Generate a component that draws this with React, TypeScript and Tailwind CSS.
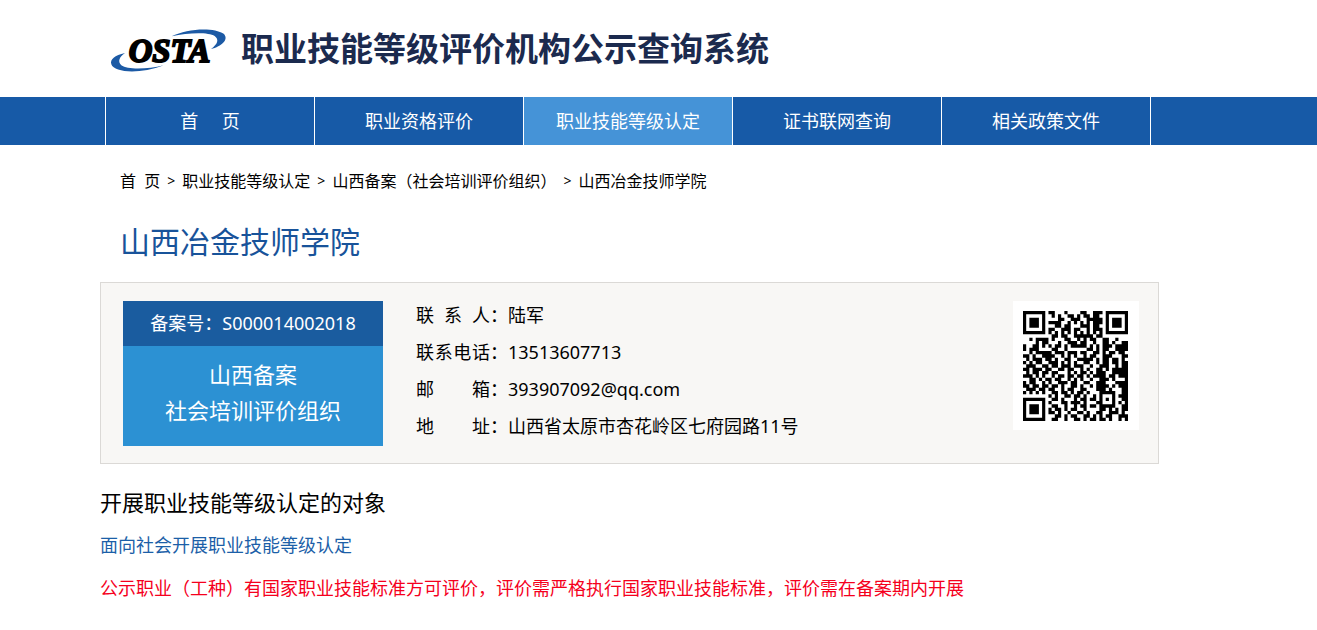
import { Fragment } from "react";
import { clsx } from "clsx";

const navItems = [
  { label: "首\u00a0\u00a0\u00a0\u00a0 页" },
  { label: "职业资格评价" },
  { label: "职业技能等级认定", active: true },
  { label: "证书联网查询" },
  { label: "相关政策文件" },
];

const crumbs = ["首\u00a0 页", "职业技能等级认定", "山西备案（社会培训评价组织）"];

const contacts = [
  { label: ["联", "系", "人"], value: "陆军" },
  { label: ["联", "系", "电", "话"], value: "13513607713" },
  { label: ["邮", "箱"], value: "393907092@qq.com" },
  { label: ["地", "址"], value: "山西省太原市杏花岭区七府园路11号" },
];

const qrModules = [
  "#######.##...#....##..###.#######",
  "#.....#..#.#..##.#.##.##..#.....#",
  "#.###.#....##..###..#####.#.###.#",
  "#.###.#.####..#.#.#.#.###.#.###.#",
  "#.###.#...##.##...###.##..#.###.#",
  "#.....#.##..###.##..#.###.#.....#",
  "#######.#.#.#.#.#.#.#.#.#.#######",
  ".........##.##..######.##........",
  "..#.####.#...##..#.#.##..##..#...",
  "....#.##...#..###.##..#..##.#..##",
  "#..##.#.#.##.#.#####.#.#.###.####",
  "#.###....##..#......##.#.##..####",
  "..#.#####.###.###.##..##.#.##.##.",
  "##.#..####..#.#.#..#.##..###...##",
  ".#.###.##.#..##..#####.#.##.##.#.",
  "#.#.##..###.#.#.#..##..#.##.##.##",
  ".###..##.##.###.###..#..###..#.##",
  "##.###.##..##.##..#.#..##.#.#####",
  ".#.##.##.##...#.#.##.#.###..#####",
  "###.#.#..#.##.##.##.#.####.##.###",
  "..##.#.##.##..#.#.#..#..###.#...#",
  "#.##..#.#..###.##..##..###...####",
  "##.##.##.##.#..##.#..#.####.#.###",
  ".###.##.##..#.##..##...###.#...##",
  "#.#.#.#..##.##.#.##.#...#####..##",
  "........#.#..##.##.#..#.#...#.###",
  "#######..##.#...#.##.##.#.#.#..##",
  "#.....#.#...##.###.#...##...#.#.#",
  "#.###.#..##..#..#.##.##.#####..##",
  "#.###.#.#.##.#.##..#....##.#.#.##",
  "#.###.#.##.#..#..##.#..##..###.#.",
  "#.....#...##.#.##..##.#.#.##..###",
  "#######..##..#..##.#.##.##.#..#.#",
];

const qrPath = qrModules
  .flatMap((row, y) =>
    [...row].map((cell, x) => (cell === "#" ? `M${x} ${y}h1v1h-1z` : ""))
  )
  .join("");

function Logo() {
  return (
    <svg className="h-[60px] w-[140px] shrink-0" viewBox="0 0 420 180" role="img" aria-label="OSTA">
      <path
        d="M75 102C44 109 29 121 34 136C43 162 122 166 191 139C143 151 83 153 64 139C52 127 58 114 75 102Z"
        fill="#1c5aa5"
      />
      <path
        d="M215 52C261 28 341 24 371 44C388 61 365 82 333 90C353 75 358 62 344 51C324 39 264 41 215 52Z"
        fill="#1c5aa5"
      />
      <text
        x="86"
        y="128"
        fontFamily="Liberation Serif, serif"
        fontSize="98"
        fontWeight="700"
        fontStyle="italic"
        fill="#000"
        stroke="#000"
        strokeWidth="6"
      >
        OSTA
      </text>
    </svg>
  );
}

function Header() {
  return (
    <header>
      <div className="mx-auto flex h-[97px] max-w-[1117px] items-center">
        <Logo />
        <h1 className="ml-px text-[33px] font-bold text-[#1b2a4e]">
          职业技能等级评价机构公示查询系统
        </h1>
      </div>
      <nav className="bg-[#175aa7]">
        <ul className="mx-auto flex max-w-[1117px] pl-[5px]">
          {navItems.map((item) => (
            <li
              key={item.label}
              className="w-[209px] border-l border-white last:w-[210px] last:border-r"
            >
              <a
                href="#"
                className={clsx(
                  "flex h-12 items-center justify-center text-lg text-white",
                  item.active && "bg-[#4593d7]"
                )}
              >
                {item.label}
              </a>
            </li>
          ))}
        </ul>
      </nav>
    </header>
  );
}

function Breadcrumb() {
  return (
    <div className="flex items-center pt-6 pl-5 text-base text-black">
      {crumbs.map((crumb) => (
        <Fragment key={crumb}>
          <a href="#">{crumb}</a>
          <span className="px-[7px] text-sm">&gt;</span>
        </Fragment>
      ))}
      <span>山西冶金技师学院</span>
    </div>
  );
}

function QrCode() {
  return (
    <div className="h-[129px] w-[126px] shrink-0 bg-white p-2.5">
      <svg
        className="h-[110px] w-[105px]"
        viewBox="0 0 33 33"
        preserveAspectRatio="none"
        role="img"
        aria-label="二维码"
      >
        <path d={qrPath} fill="#000" />
      </svg>
    </div>
  );
}

function OrgCard() {
  return (
    <section className="mt-5 flex h-[182px] max-w-[1059px] items-start border border-[#dbd9d6] bg-[#f8f7f5] pt-[18px] pr-[19px] pl-[22px]">
      <div className="w-[260px] shrink-0 text-center text-white">
        <p className="bg-[#1a5c9f] text-lg leading-[45px]">备案号：S000014002018</p>
        <p className="h-[100px] bg-[#2c91d3] pt-2.5 text-[22px] leading-9">
          山西备案
          <br />
          社会培训评价组织
        </p>
      </div>
      <dl className="-mt-1 ml-[33px] grow text-lg leading-[37px] text-black">
        {contacts.map((row) => (
          <div key={row.value} className="flex">
            <dt className="flex">
              <span className="flex w-[74px] justify-between">
                {row.label.map((char) => (
                  <span key={char}>{char}</span>
                ))}
              </span>
              ：
            </dt>
            <dd>{row.value}</dd>
          </div>
        ))}
      </dl>
      <QrCode />
    </section>
  );
}

export default function App() {
  return (
    <div
      lang="zh-CN"
      className="min-h-screen bg-white font-['Noto_Sans','Noto_Sans_CJK_SC',sans-serif]"
    >
      <Header />
      <main className="mx-auto max-w-[1117px] pb-6">
        <Breadcrumb />
        <h2 className="mt-[29px] pl-5 text-[30px] leading-10 text-[#18539a]">山西冶金技师学院</h2>
        <OrgCard />
        <h3 className="mt-[22px] text-[22px] leading-8 text-black">开展职业技能等级认定的对象</h3>
        <p className="mt-[13px] text-lg text-[#1c5fa8]">面向社会开展职业技能等级认定</p>
        <p className="mt-[15px] text-lg text-[#f5001d]">
          公示职业（工种）有国家职业技能标准方可评价，评价需严格执行国家职业技能标准，评价需在备案期内开展
        </p>
      </main>
    </div>
  );
}
